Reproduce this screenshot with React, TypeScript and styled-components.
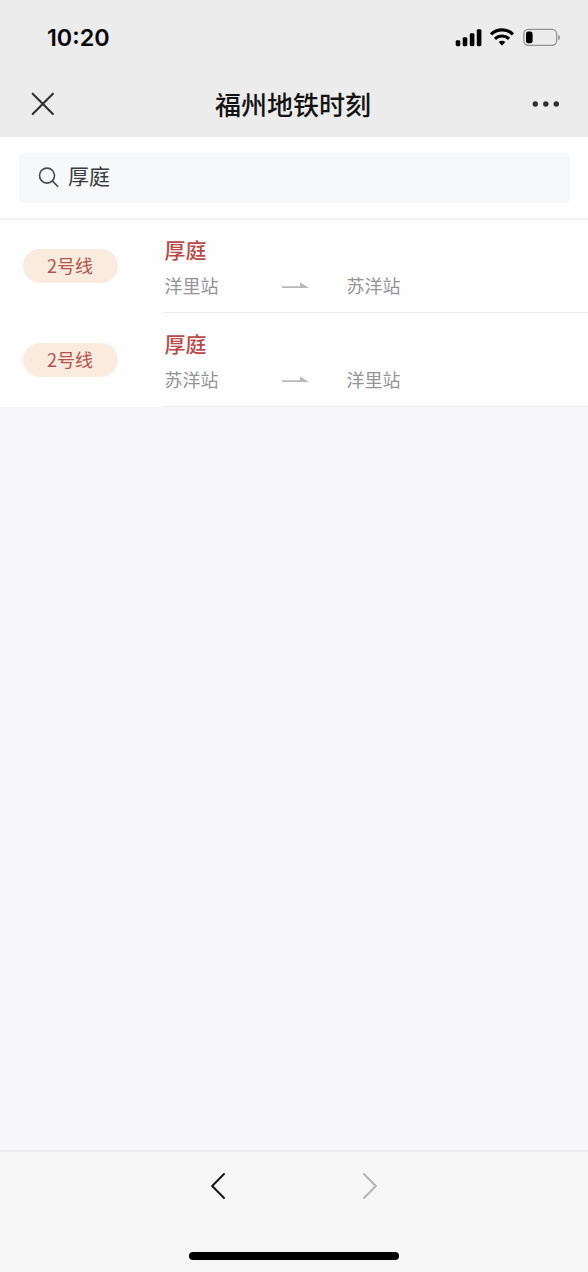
import React from "react";
import styled, { createGlobalStyle } from "styled-components";

const GlobalStyle = createGlobalStyle`
  * { box-sizing: border-box; }
  body {
    margin: 0;
    background: #f7f7fa;
    font-family: "Liberation Sans", "Noto Sans CJK SC", sans-serif;
  }
`;

const Screen = styled.div`
  display: flex;
  flex-direction: column;
  width: 100%;
  height: 1272px;
  background: #f7f7fa;
`;

const Header = styled.header`
  height: 137px;
  background: #ececec;
`;

const StatusBar = styled.div`
  display: flex;
  justify-content: space-between;
  align-items: center;
  height: 75px;
  padding: 0 27px 0 47px;
`;

const Clock = styled.span`
  font: 600 23.3px/28px Inter, sans-serif;
  color: #060606;
`;

const StatusIcons = styled.svg`
  display: block;
  width: 106px;
  height: 20px;
`;

const TitleBar = styled.div`
  display: grid;
  grid-template-columns: 56px 1fr 56px;
  align-items: center;
  height: 58px;
  padding: 0 28px 0 31px;
`;

const Title = styled.h1`
  margin: 0 5px 0 0;
  text-align: center;
  font: 500 26px/38px "Noto Sans CJK SC", sans-serif;
  color: #141414;
`;

const BarIcon = styled.svg<{ $end?: boolean }>`
  display: block;
  justify-self: ${(p) => (p.$end ? "end" : "start")};
`;

const SearchArea = styled.div`
  height: 83px;
  padding: 16px 18px 0 19px;
  background: #fefefe;
  border-bottom: 2px solid #f2f2f3;
`;

const SearchBox = styled.div`
  display: flex;
  align-items: center;
  gap: 8px;
  height: 50px;
  padding: 0 19px;
  border-radius: 5px;
  background: #f6f8fa;
`;

const Query = styled.span`
  margin-top: -7px;
  font: 400 21px/30px "Noto Sans CJK SC", sans-serif;
  color: #3b3b3e;
`;

const Results = styled.ul`
  margin: 0;
  padding: 0;
  list-style: none;
  background: #fefefe;
`;

const Row = styled.li`
  display: flex;
  height: 93px;

  & + & { height: 94px; padding-top: 1px; }
`;

const BadgeCell = styled.div`
  width: 163px;
  padding: 29px 0 0 23px;
`;

const Badge = styled.span`
  display: block;
  width: 95px;
  height: 34px;
  padding-right: 1px;
  border-radius: 17px;
  background: #faebdf;
  text-align: center;
  font: 400 18px/32px "Noto Sans CJK SC", sans-serif;
  color: #b7534d;
`;

const Detail = styled.div`
  flex: 1;
  padding: 14px 0 0 1.5px;
  border-bottom: 1px solid #ececee;
`;

const Station = styled.div`
  font: 500 21px/30px "Noto Sans CJK SC", sans-serif;
  color: #b94a46;
`;

const Route = styled.div`
  display: grid;
  grid-template-columns: 117px 65px auto;
  justify-content: start;
  margin-top: 8px;
  font: 400 18px/26px "Noto Sans CJK SC", sans-serif;
  color: #949496;
`;

const Arrow = styled.svg`
  display: block;
  width: 28px;
  height: 8px;
  margin-top: 9px;
`;

const Footer = styled.footer`
  display: flex;
  flex-direction: column;
  align-items: center;
  justify-content: space-between;
  height: 122px;
  margin-top: auto;
  padding: 20px 0 12px;
  border-top: 2px solid #ececee;
  background: #f6f6f6;
`;

const Pager = styled.nav`
  display: flex;
  gap: 136px;
`;

const HomeIndicator = styled.div`
  width: 210px;
  height: 8px;
  border-radius: 4px;
  background: #000;
`;

const routes = [
  { line: "2号线", station: "厚庭", from: "洋里站", to: "苏洋站" },
  { line: "2号线", station: "厚庭", from: "苏洋站", to: "洋里站" },
];

export default function App() {
  return (
    <>
      <GlobalStyle />
      <Screen>
        <Header>
          <StatusBar>
            <Clock>10:20</Clock>
            <StatusIcons viewBox="0 0 106 20">
              <rect x="0.7" y="12.2" width="4.6" height="6" rx="1.4" />
              <rect x="7.7" y="9.2" width="4.6" height="9" rx="1.4" />
              <rect x="14.8" y="5.2" width="4.6" height="13" rx="1.4" />
              <rect x="21.8" y="1.2" width="4.6" height="17" rx="1.4" />
              <g fill="none" stroke="#000" strokeWidth="3.1">
                <path d="M36 6.3C42.2.4 51.8.4 58 6.3" />
                <path d="M40 10.8c4-3.7 10-3.7 14 0" />
              </g>
              <path d="M43.7 14.1c1.9-1.7 4.7-1.7 6.6 0L47 17.7z" />
              <rect x="68.8" y="1.3" width="32.8" height="16" rx="4.5" fill="none" stroke="#949494" strokeWidth="1.3" />
              <rect x="71" y="3.6" width="6.6" height="11.6" rx="2.2" />
              <path d="M103.2 7c2.4.6 2.4 4.6 0 5.2z" fill="#949494" />
            </StatusIcons>
          </StatusBar>
          <TitleBar>
            <BarIcon width="24" height="24" viewBox="0 0 24 24">
              <path d="M1.7 1.7l20.2 20.2M21.9 1.7L1.7 21.9" fill="none" stroke="#303030" strokeWidth="2.1" strokeLinecap="round" />
            </BarIcon>
            <Title>福州地铁时刻</Title>
            <BarIcon $end width="28" height="8" viewBox="0 0 28 8" fill="#303030">
              <circle cx="3.3" cy="4" r="2.7" />
              <circle cx="13.8" cy="4" r="2.7" />
              <circle cx="24.3" cy="4" r="2.7" />
            </BarIcon>
          </TitleBar>
        </Header>
        <SearchArea>
          <SearchBox>
            <svg width="22" height="22" viewBox="0 0 22 22" fill="none" stroke="#48484a" strokeWidth="1.6">
              <circle cx="9" cy="8.6" r="7.5" />
              <path d="M14.3 13.9l5.8 5.8" />
            </svg>
            <Query>厚庭</Query>
          </SearchBox>
        </SearchArea>
        <Results>
          {routes.map((r) => (
            <Row key={r.from}>
              <BadgeCell>
                <Badge>{r.line}</Badge>
              </BadgeCell>
              <Detail>
                <Station>{r.station}</Station>
                <Route>
                  <span>{r.from}</span>
                  <Arrow viewBox="0 0 28 8">
                    <path d="M0 5.2h18V1.4l9 5.6H0z" fill="#b8b8b8" />
                  </Arrow>
                  <span>{r.to}</span>
                </Route>
              </Detail>
            </Row>
          ))}
        </Results>
        <Footer>
          <Pager>
            <svg width="16" height="28" viewBox="0 0 16 28" fill="none" stroke="#161616" strokeWidth="2" strokeLinecap="round">
              <path d="M14 2L2.2 14 14 26" />
            </svg>
            <svg width="16" height="28" viewBox="0 0 16 28" fill="none" stroke="#b3b3b3" strokeWidth="2" strokeLinecap="round">
              <path d="M2 2l11.8 12L2 26" />
            </svg>
          </Pager>
          <HomeIndicator />
        </Footer>
      </Screen>
    </>
  );
}
